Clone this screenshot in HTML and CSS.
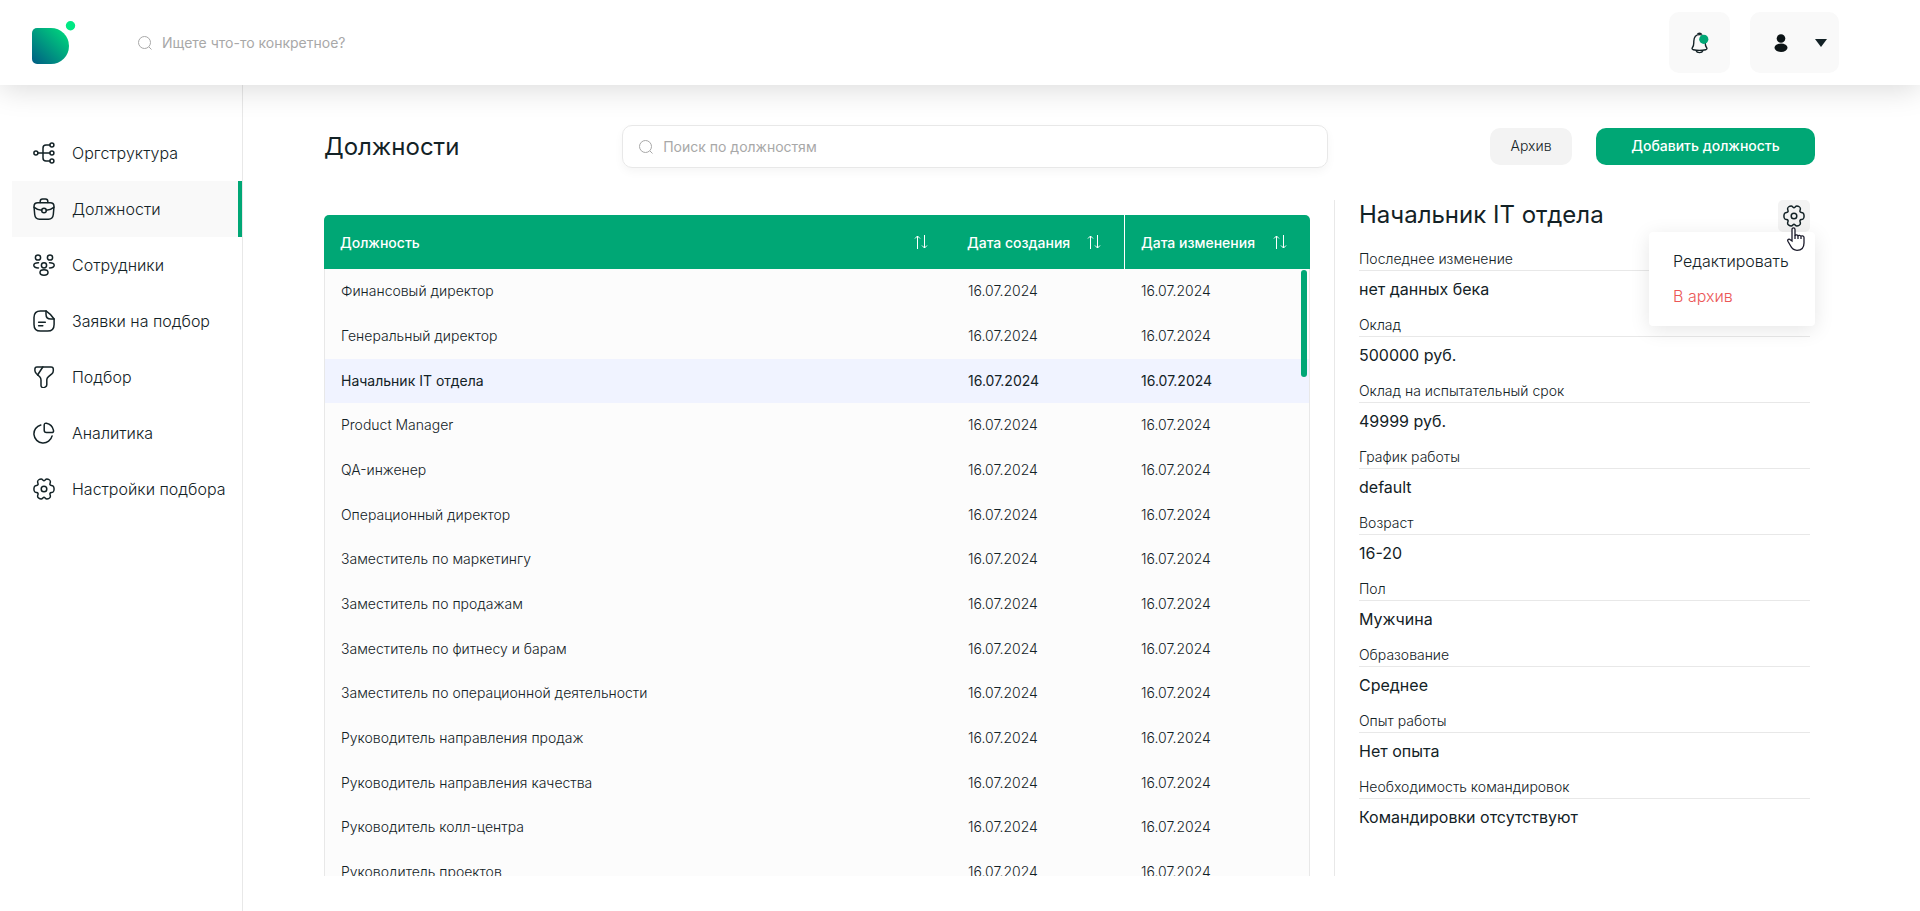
FILE: index.html
```html
<!DOCTYPE html>
<html lang="ru">
<head>
    <meta charset="UTF-8">
    <meta name="viewport" content="width=device-width, initial-scale=1.0">
    <title>Должности</title>
    <link rel="stylesheet" href="styles.css">
</head>
<body>
    <!-- Общие иконки -->
    <svg class="sprite" aria-hidden="true">
        <symbol id="icon-gear" viewBox="0 0 22 22">
            <path d="M11 2.800c1 0 1.400-1.700 2.800-1.700 1.600 0 3.600 1 3.600 2.700 0 1.300-.9 1.900-.4 2.900s1.700.4 2.900 1.100c1.600 1 1.600 5.400 0 6.400-1.200.7-2.400.1-2.900 1.100s.4 1.600.4 2.900c0 1.700-2 2.700-3.600 2.700-1.400 0-1.800-1.700-2.800-1.700s-1.400 1.700-2.800 1.700c-1.600 0-3.600-1-3.600-2.700 0-1.300.9-1.900.4-2.900s-1.700-.4-2.900-1.100c-1.600-1-1.600-5.400 0-6.400 1.200-.7 2.400-.1 2.900-1.100s-.4-1.600-.4-2.900c0-1.700 2-2.700 3.600-2.700 1.400 0 1.800 1.700 2.800 1.700z"/>
            <circle cx="11" cy="11" r="2.800"/>
        </symbol>
        <symbol id="icon-search" viewBox="0 0 14 14">
            <circle cx="6.5" cy="6.5" r="6"/>
            <path d="M11 11l2.5 2.5"/>
        </symbol>
        <symbol id="icon-sort" viewBox="0 0 14 14">
            <path d="M3.500 14V1M1 3.500L3.500 1 6 3.500M10.500 0v13M8 10.500l2.500 2.500 2.500-2.500"/>
        </symbol>
    </svg>

    <header class="header">
        <a href="#" class="logo" aria-label="На главную">
            <svg width="44" height="44" viewBox="0 0 44 44">
                <defs>
                    <linearGradient id="logo-gradient" x1="0" y1="1" x2="1" y2="0">
                        <stop offset="0" stop-color="#005c84"/>
                        <stop offset="1" stop-color="#00e07c"/>
                    </linearGradient>
                </defs>
                <path d="M5 7h14a18 18 0 0 1 0 36H5a5 5 0 0 1-5-5V12a5 5 0 0 1 5-5z" fill="url(#logo-gradient)"/>
                <circle cx="38.5" cy="4.7" r="4.7" fill="#00e884"/>
            </svg>
        </a>
        <label class="header-search">
            <svg class="icon-search"><use href="#icon-search"/></svg>
            <input type="search" placeholder="Ищете что-то конкретное?" aria-label="Поиск">
        </label>
        <button type="button" class="header-btn" aria-label="Уведомления">
            <svg width="20" height="22" viewBox="0 0 20 22">
                <path d="M2.5 15.500c1.500-1.700 1.200-3 1.300-6.300C4 5 6.500 2.600 9.500 2.600s5.500 2.400 5.700 6.600c.1 3.300-.2 4.600 1.300 6.300.8 1 .5 1.900-.8 2.200-4 .9-8.400.9-12.400 0-1.300-.3-1.600-1.200-.8-2.200z" fill="none" stroke="#132226" stroke-width="1.4"/>
                <path d="M7.5 2.400c.4-1.600 3.600-1.600 4 0M6 18.500c1 2.800 6 2.800 7 0" fill="none" stroke="#132226" stroke-width="1.4"/>
                <circle cx="13.8" cy="7.3" r="4.6" fill="#00a775"/>
            </svg>
        </button>
        <button type="button" class="header-btn header-user" aria-label="Профиль">
            <svg width="14" height="18" viewBox="0 0 14 18" fill="#0c1416">
                <circle cx="7" cy="4.5" r="4.3"/>
                <ellipse cx="7" cy="13.7" rx="6.5" ry="4.2"/>
            </svg>
            <svg width="12" height="8" viewBox="0 0 12 8"><path d="M0 0h12L6 8z" fill="#132226"/></svg>
        </button>
    </header>

    <div class="layout">
        <nav class="sidebar">
            <a href="#" class="nav-link">
                <svg class="nav-icon" viewBox="0 0 22 22">
                    <circle cx="2.9" cy="11" r="2"/><circle cx="18.9" cy="3" r="2"/><circle cx="18.9" cy="11" r="2"/><circle cx="18.9" cy="19" r="2"/>
                    <path d="M16.9 3H13a3 3 0 0 0-3 3v10a3 3 0 0 0 3 3h3.900M4.900 11h12"/>
                </svg>
                Оргструктура
            </a>
            <a href="#" class="nav-link active">
                <svg class="nav-icon" viewBox="0 0 22 22">
                    <path d="M1 8.500C1 6 2.300 4.800 4.800 4.800h12.400C19.700 4.800 21 6 21 8.500l-.7 8c-.3 3-1.800 4.700-4.800 4.700h-9c-3 0-4.500-1.700-4.800-4.700z"/>
                    <path d="M7.200 4.500V3.300c0-1.500.8-2.300 2.300-2.300h3c1.500 0 2.300.8 2.300 2.300v1.200M1.200 9.300c2.200 1.800 4.700 2.800 7.500 3M20.800 9.300c-2.200 1.800-4.700 2.800-7.500 3"/>
                    <circle cx="11" cy="12.5" r="2.3"/>
                </svg>
                Должности
            </a>
            <a href="#" class="nav-link">
                <svg class="nav-icon" viewBox="0 0 22 22">
                    <circle cx="5" cy="3.5" r="2.6"/><circle cx="17" cy="3.5" r="2.6"/><circle cx="11" cy="11.3" r="2.6"/>
                    <ellipse cx="11" cy="18.5" rx="4" ry="2.7"/>
                    <path d="M5.500 8.700C2.500 8.600.8 9.700.8 11.300s1.800 2.700 4.700 2.600M16.500 8.700c3-.1 4.700 1 4.700 2.600s-1.800 2.700-4.700 2.600"/>
                </svg>
                Сотрудники
            </a>
            <a href="#" class="nav-link">
                <svg class="nav-icon" viewBox="0 0 22 22">
                    <path d="M13 .9H7.500C3.200.9 1 3.100 1 7.500v7C1 18.900 3.200 21.100 7.500 21.100h7c4.300 0 6.600-2.200 6.600-6.600V9c-2.500-3.700-4.600-5.800-8.100-8.100z"/>
                    <path d="M13 .9v3.300C13 7.500 14.500 9 17.800 9h3.300M5.600 12.200h6.700M5.600 15.800h4.200"/>
                </svg>
                Заявки на подбор
            </a>
            <a href="#" class="nav-link">
                <svg class="nav-icon" viewBox="0 0 22 22">
                    <path d="M4 1h14c1.400 0 2.300.9 2.300 2.200v1.500c0 1.400-.5 2.300-1.500 3.200l-3.300 2.700c-1.200 1-1.700 1.900-1.700 3.200v5c0 1-.5 1.700-1.300 2.100l-1 .5c-1.800.8-3.500-.3-3.500-2v-5.400c0-1.300-.5-2.300-1.300-3.200L3.300 7.500c-.9-1-1.400-1.900-1.400-3V3.200C1.900 1.900 2.700 1 4 1z"/>
                    <path d="M9.800 1L4.600 9"/>
                </svg>
                Подбор
            </a>
            <a href="#" class="nav-link">
                <svg class="nav-icon" viewBox="0 0 22 22">
                    <path d="M7.800 2.900a9.200 9.200 0 1 0 11.300 11"/>
                    <path d="M11.200 3c0-1.400.9-2.100 2.200-1.800a9.300 9.300 0 0 1 7.100 7.100c.3 1.400-.4 2.300-1.800 2.300h-5.200c-1.500 0-2.300-.8-2.300-2.300z"/>
                </svg>
                Аналитика
            </a>
            <a href="#" class="nav-link">
                <svg class="nav-icon"><use href="#icon-gear"/></svg>
                Настройки подбора
            </a>
        </nav>

        <main class="main">
            <div class="toolbar">
                <h1 class="title">Должности</h1>
                <label class="toolbar-search">
                    <svg class="icon-search"><use href="#icon-search"/></svg>
                    <input type="search" placeholder="Поиск по должностям" aria-label="Поиск по должностям">
                </label>
                <div class="toolbar-actions">
                    <button type="button" class="btn btn-archive">Архив</button>
                    <button type="button" class="btn btn-add">Добавить должность</button>
                </div>
            </div>

            <div class="content">
                <section class="table-wrap">
                    <table class="table">
                        <colgroup>
                            <col>
                            <col class="col-created">
                            <col class="col-changed">
                        </colgroup>
                        <thead>
                            <tr>
                                <th><div class="th-inner">Должность <svg class="icon-sort"><use href="#icon-sort"/></svg></div></th>
                                <th><div class="th-inner">Дата создания <svg class="icon-sort"><use href="#icon-sort"/></svg></div></th>
                                <th><div class="th-inner">Дата изменения <svg class="icon-sort"><use href="#icon-sort"/></svg></div></th>
                            </tr>
                        </thead>
                        <tbody>
                            <tr><td>Финансовый директор</td><td>16.07.2024</td><td>16.07.2024</td></tr>
                            <tr><td>Генеральный директор</td><td>16.07.2024</td><td>16.07.2024</td></tr>
                            <tr class="selected"><td>Начальник IT отдела</td><td>16.07.2024</td><td>16.07.2024</td></tr>
                            <tr><td>Product Manager</td><td>16.07.2024</td><td>16.07.2024</td></tr>
                            <tr><td>QA-инженер</td><td>16.07.2024</td><td>16.07.2024</td></tr>
                            <tr><td>Операционный директор</td><td>16.07.2024</td><td>16.07.2024</td></tr>
                            <tr><td>Заместитель по маркетингу</td><td>16.07.2024</td><td>16.07.2024</td></tr>
                            <tr><td>Заместитель по продажам</td><td>16.07.2024</td><td>16.07.2024</td></tr>
                            <tr><td>Заместитель по фитнесу и барам</td><td>16.07.2024</td><td>16.07.2024</td></tr>
                            <tr><td>Заместитель по операционной деятельности</td><td>16.07.2024</td><td>16.07.2024</td></tr>
                            <tr><td>Руководитель направления продаж</td><td>16.07.2024</td><td>16.07.2024</td></tr>
                            <tr><td>Руководитель направления качества</td><td>16.07.2024</td><td>16.07.2024</td></tr>
                            <tr><td>Руководитель колл-центра</td><td>16.07.2024</td><td>16.07.2024</td></tr>
                            <tr><td>Руководитель проектов</td><td>16.07.2024</td><td>16.07.2024</td></tr>
                        </tbody>
                    </table>
                    <div class="scroll-thumb"></div>
                </section>

                <aside class="details">
                    <div class="details-head">
                        <h2 class="details-title">Начальник IT отдела</h2>
                        <button type="button" class="btn-settings" aria-label="Действия">
                            <svg class="nav-icon"><use href="#icon-gear"/></svg>
                        </button>
                        <div class="menu">
                            <button type="button" class="menu-item">Редактировать</button>
                            <button type="button" class="menu-item danger">В архив</button>
                        </div>
                        <svg class="cursor" width="18" height="24" viewBox="0 0 18 24">
                            <path d="M5 14V2.500C5 .3 8 .3 8 2.500V9c0-1.500 3-1.500 3 .3 0-1.500 3-1.300 3 .5 0-1.500 3-1.200 3 .7V16c0 4.500-2.500 7.300-7 7.300-3.500 0-5.200-1.800-6.500-4.500L.9 14.200c-.8-1.700 1.200-2.700 2.400-1.400z" fill="#fff" stroke="#1a1a2a" stroke-width="1.3"/>
                            <path d="M8 8.500V12M11 9v3M14 9.500V12" stroke="#1a1a2a" stroke-width="1.3"/>
                        </svg>
                    </div>
                    <dl class="fields">
                        <dt>Последнее изменение</dt>
                        <dd>нет данных бека</dd>
                        <dt>Оклад</dt>
                        <dd>500000 руб.</dd>
                        <dt>Оклад на испытательный срок</dt>
                        <dd>49999 руб.</dd>
                        <dt>График работы</dt>
                        <dd>default</dd>
                        <dt>Возраст</dt>
                        <dd>16-20</dd>
                        <dt>Пол</dt>
                        <dd>Мужчина</dd>
                        <dt>Образование</dt>
                        <dd>Среднее</dd>
                        <dt>Опыт работы</dt>
                        <dd>Нет опыта</dd>
                        <dt>Необходимость командировок</dt>
                        <dd>Командировки отсутствуют</dd>
                    </dl>
                </aside>
            </div>
        </main>
    </div>
</body>
</html>
```
FILE: styles.css
```css
:root {
    --green: #00a775;
    --dark: #132226;
    --line: #e8e8e8;
    --light: #f9f9f9;
    --placeholder: #a8a8a8;
}

* {
    margin: 0;
    padding: 0;
    box-sizing: border-box;
}

body {
    height: 100vh;
    display: flex;
    flex-direction: column;
    overflow: hidden;
    background: #fff;
    color: var(--dark);
    font-family: Inter, sans-serif;
    font-size: 14px;
    font-weight: 300;
}

button,
input {
    font: inherit;
    color: inherit;
    border: none;
    background: none;
    outline: none;
}

button {
    cursor: pointer;
}

input::placeholder {
    color: var(--placeholder);
    opacity: 1;
}

.sprite {
    position: absolute;
    width: 0;
    height: 0;
}

.icon-search,
.icon-sort {
    width: 14px;
    height: 14px;
    flex-shrink: 0;
    fill: none;
    stroke: var(--placeholder);
}

/* Шапка */
.header {
    position: relative;
    display: flex;
    align-items: center;
    height: 85px;
    flex-shrink: 0;
    padding: 0 81px 0 32px;
    background: #fff;
    box-shadow: 0 4px 30px rgba(0, 0, 0, 0.15);
}

.logo {
    width: 44px;
    height: 44px;
    margin-right: 62px;
}

.header-search {
    display: flex;
    align-items: center;
    gap: 10px;
    flex: 1;
}

.header-search input,
.toolbar-search input {
    flex: 1;
    font-weight: 400;
}

.header-btn {
    display: flex;
    align-items: center;
    justify-content: center;
    width: 61px;
    height: 61px;
    margin-left: 20px;
    border-radius: 10px;
    background: var(--light);
}

.header-user {
    width: 89px;
    justify-content: space-between;
    padding: 0 12px 0 24px;
}

.layout {
    display: flex;
    flex: 1;
    min-height: 0;
}

/* Боковое меню */
.sidebar {
    width: 243px;
    flex-shrink: 0;
    padding: 40px 0 0 12px;
    border-right: 1px solid var(--line);
}

.nav-link {
    display: flex;
    align-items: center;
    gap: 17px;
    height: 56px;
    padding-left: 21px;
    color: var(--dark);
    font-size: 16px;
    text-decoration: none;
    white-space: nowrap;
}

.nav-link.active {
    background: var(--light);
    border-right: 4px solid var(--green);
}

.nav-icon {
    width: 22px;
    height: 22px;
    flex-shrink: 0;
    fill: none;
    stroke: var(--dark);
    stroke-width: 1.5;
    stroke-linecap: round;
    stroke-linejoin: round;
}

.main {
    flex: 1;
    min-width: 0;
    display: flex;
    flex-direction: column;
    padding: 40px 105px 35px 81px;
}

/* Верхняя панель */
.toolbar {
    display: flex;
    align-items: center;
    margin-bottom: 32px;
}

.title {
    width: 20%;
    font-size: 24px;
    font-weight: 400;
}

.toolbar-search {
    display: flex;
    align-items: center;
    gap: 10px;
    flex: 1;
    height: 43px;
    padding: 0 16px;
    border: 1px solid var(--line);
    border-radius: 10px;
    box-shadow: 0 4px 10px rgba(0, 0, 0, 0.04);
}

.toolbar-actions {
    display: flex;
    gap: 24px;
    margin-left: 162px;
}

.btn {
    height: 37px;
    padding-bottom: 2px;
    border-radius: 10px;
}

.btn-archive {
    width: 82px;
    background: #f3f3f3;
}

.btn-add {
    width: 219px;
    background: var(--green);
    color: #fff;
    font-weight: 500;
}

.content {
    display: flex;
    gap: 24px;
    flex: 1;
    min-height: 0;
}

/* Таблица */
.table-wrap {
    position: relative;
    flex: 1;
    margin-top: 15px;
    overflow: hidden;
    border-radius: 5px 5px 0 0;
}

.table {
    width: 100%;
    table-layout: fixed;
    border-collapse: separate;
    border-spacing: 0;
    text-align: left;
}

.col-created {
    width: 173px;
}

.col-changed {
    width: 186px;
}

.table th {
    height: 54px;
    padding: 0 23px 0 16px;
    background: var(--green);
    color: #fff;
    font-weight: 500;
    white-space: nowrap;
}

.table th:last-child {
    border-left: 1px solid #fff;
}

.th-inner {
    display: flex;
    align-items: center;
    justify-content: space-between;
}

.icon-sort {
    stroke: #fff;
}

.table td {
    height: 45px;
    padding: 0 17px 2px;
    background: #fcfcfc;
}

.table tr:nth-child(3n) td {
    height: 44px;
}

.table td:first-child {
    padding-left: 16px;
    border-left: 1px solid var(--line);
}

.table td:last-child {
    border-right: 1px solid var(--line);
}

.table .selected td {
    background: #f0f3ff;
    font-weight: 400;
}

.scroll-thumb {
    position: absolute;
    top: 55px;
    right: 3px;
    width: 6px;
    height: 107px;
    border-radius: 3px;
    background: var(--green);
}

/* Карточка должности */
.details {
    width: 481px;
    flex-shrink: 0;
    padding: 0 5px 0 24px;
    border-left: 1px solid var(--line);
}

.details-head {
    position: relative;
    display: flex;
    align-items: center;
    justify-content: space-between;
    height: 32px;
}

.details-title {
    padding-bottom: 2px;
    font-size: 24px;
    font-weight: 400;
    line-height: 30px;
}

.btn-settings {
    display: flex;
    align-items: center;
    justify-content: center;
    width: 32px;
    height: 32px;
    border-radius: 5px;
    background: #f3f3f3;
}

.menu {
    position: absolute;
    top: 32px;
    right: -5px;
    width: 166px;
    padding: 11px 0 13px;
    border-radius: 4px;
    background: #fff;
    box-shadow: 0 4px 20px rgba(0, 0, 0, 0.1);
}

.menu-item {
    display: block;
    width: 100%;
    height: 35px;
    padding-left: 24px;
    font-size: 16px;
    text-align: left;
}

.menu-item.danger {
    color: #eb5757;
}

.cursor {
    position: absolute;
    top: 27px;
    right: 5px;
}

.fields {
    margin-top: 18px;
}

.fields dt {
    height: 21px;
    line-height: 18px;
    border-bottom: 1px solid var(--line);
}

.fields dd {
    padding-top: 7px;
    margin-bottom: 16px;
    font-size: 16px;
    font-weight: 400;
    line-height: 22px;
}
```
